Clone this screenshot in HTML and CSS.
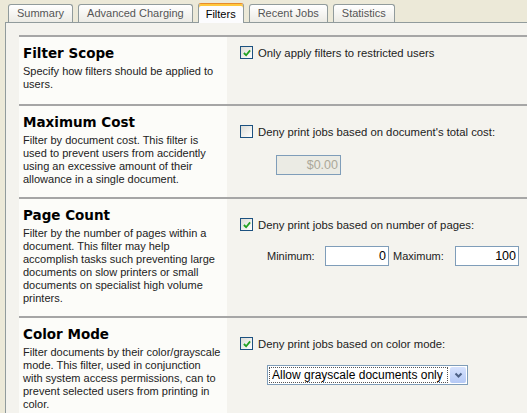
FILE: index.html
```html
<!DOCTYPE html>
<html lang="en">
<head>
  <meta charset="UTF-8">
  <title>Filters</title>
  <link rel="stylesheet" href="styles.css">
</head>
<body>

  <div class="tabs">
    <div class="tab">Summary</div>
    <div class="tab">Advanced Charging</div>
    <div class="tab active">Filters</div>
    <div class="tab">Recent Jobs</div>
    <div class="tab">Statistics</div>
  </div>

  <div class="panel">

    <div class="filter filter-first">
      <div class="filter-info">
        <h3>Filter Scope</h3>
        <p>Specify how filters should be applied to users.</p>
      </div>
      <div class="filter-opts">
        <label class="check-row"><span class="check on"><svg viewBox="0 0 9 9"><path d="M1 4.5 L3.5 7 L8 1.5" /></svg></span>Only apply filters to restricted users</label>
      </div>
    </div>

    <div class="filter">
      <div class="filter-info">
        <h3>Maximum Cost</h3>
        <p>Filter by document cost. This filter is used to prevent users from accidently using an excessive amount of their allowance in a single document.</p>
      </div>
      <div class="filter-opts">
        <label class="check-row"><span class="check"></span>Deny print jobs based on document's total cost:</label>
        <div class="field-row cost-row">
          <input class="num" type="text" value="$0.00" disabled>
        </div>
      </div>
    </div>

    <div class="filter">
      <div class="filter-info">
        <h3>Page Count</h3>
        <p>Filter by the number of pages within a document. This filter may help accomplish tasks such preventing large documents on slow printers or small documents on specialist high volume printers.</p>
      </div>
      <div class="filter-opts">
        <label class="check-row"><span class="check on"><svg viewBox="0 0 9 9"><path d="M1 4.5 L3.5 7 L8 1.5" /></svg></span>Deny print jobs based on number of pages:</label>
        <div class="field-row">
          <span class="field-label">Minimum:</span>
          <input class="num" type="text" value="0">
          <span class="field-label">Maximum:</span>
          <input class="num" type="text" value="100">
        </div>
      </div>
    </div>

    <div class="filter">
      <div class="filter-info">
        <h3>Color Mode</h3>
        <p>Filter documents by their color/grayscale mode. This filter, used in conjunction with system access permissions, can to prevent selected users from printing in color.</p>
      </div>
      <div class="filter-opts">
        <label class="check-row"><span class="check on"><svg viewBox="0 0 9 9"><path d="M1 4.5 L3.5 7 L8 1.5" /></svg></span>Deny print jobs based on color mode:</label>
        <div class="field-row">
          <div class="dropdown">
            <span class="dropdown-value">Allow grayscale documents only</span>
            <span class="dropdown-btn"><svg viewBox="0 0 9 6"><path d="M1.5 1.5 L4.5 4.5 L7.5 1.5" /></svg></span>
          </div>
        </div>
      </div>
    </div>

  </div>

</body>
</html>
```

FILE: styles.css
```css
body {
  margin: 0;
  padding: 0;
  background-color: #ece9d8;
  font-family: "Liberation Sans", Arial, sans-serif;
  font-size: 11px;
  color: #222;
  overflow: hidden;
}

/* tab strip */
.tabs {
  display: flex;
  align-items: flex-end;
  gap: 5px;
  padding: 3px 0 0 8px;
  height: 19px;
}

.tab {
  height: 17px;
  line-height: 17px;
  padding: 0 8px;
  border: 1px solid #919b9c;
  border-bottom: none;
  border-radius: 3px 3px 0 0;
  background: linear-gradient(#ffffff, #ecebe5);
  color: #555;
  font-size: 11px;
}

.tab.active {
  height: 19px;
  line-height: 20px;
  padding: 0 7px;
  color: #000;
  background: #fcfcfe;
  border-top: 1px solid #e68b2c;
  box-shadow: inset 0 2px 0 #ffc73c;
  position: relative;
  z-index: 1;
  margin-bottom: -1px;
}

.panel {
  margin-left: 5px;
  width: 540px;
  height: 390px;
  border: 1px solid #919b9c;
  background-color: #f4f3ee;
  padding: 12px 0 0 13px;
}

/* filter sections */
.filter {
  display: grid;
  grid-template-columns: 208px 1fr;
  border-top: 2px solid #a6a6a6;
}

.filter-info {
  background-color: #fcfcf9;
  padding: 8px 4px 11px 4px;
}

.filter-info h3 {
  margin: 0;
  font-family: "DejaVu Sans", Verdana, sans-serif;
  font-size: 13.5px;
  line-height: 16px;
  color: #000;
}

.filter-info p {
  margin: 4px 0 0 0;
  line-height: 13px;
  color: #222;
}

.filter-first .filter-info {
  padding-bottom: 13px;
}

.filter-opts {
  padding: 19px 0 0 13px;
}

.filter-first .filter-opts {
  padding-top: 9px;
}

.check-row {
  display: flex;
  align-items: center;
  gap: 5px;
  height: 13px;
  color: #222;
  font-size: 11.3px;
}

.check {
  box-sizing: border-box;
  width: 13px;
  height: 13px;
  border: 1px solid #1c5180;
  background: linear-gradient(135deg, #dcdcd6, #ffffff);
  display: flex;
  align-items: center;
  justify-content: center;
}

.check svg {
  width: 8px;
  height: 8px;
  fill: none;
  stroke: #21a121;
  stroke-width: 2;
}

.field-row {
  display: flex;
  align-items: center;
  margin: 15px 0 0 27px;
}

.cost-row {
  margin: 17px 0 0 36px;
}

.field-label {
  width: 58px;
}

.num + .field-label {
  width: 62px;
  padding-left: 4px;
}

.num {
  box-sizing: border-box;
  width: 64px;
  height: 20px;
  border: 1px solid #7f9db9;
  background-color: #fff;
  padding: 0 2px;
  text-align: right;
  font-family: "Liberation Sans", Arial, sans-serif;
  font-size: 12.5px;
  color: #000;
}

.num:disabled {
  background-color: #ebebe4;
  color: #aca899;
  width: 65px;
}

/* fake combo box */
.dropdown {
  box-sizing: border-box;
  display: flex;
  align-items: center;
  width: 201px;
  height: 20px;
  border: 1px solid #7f9db9;
  background-color: #fff;
  padding: 1px;
}

.dropdown-value {
  flex: 1;
  height: 16px;
  line-height: 16px;
  padding-left: 3px;
  white-space: nowrap;
  overflow: hidden;
  outline: 1px dotted #555;
  outline-offset: -1px;
  font-size: 12px;
  color: #000;
}

.dropdown-btn {
  width: 16px;
  height: 16px;
  margin-left: 2px;
  border-radius: 2px;
  background: linear-gradient(#d6e2fd, #b5c9f5);
  display: flex;
  align-items: center;
  justify-content: center;
}

.dropdown-btn svg {
  width: 9px;
  height: 6px;
  fill: none;
  stroke: #4d6185;
  stroke-width: 2;
}
```
